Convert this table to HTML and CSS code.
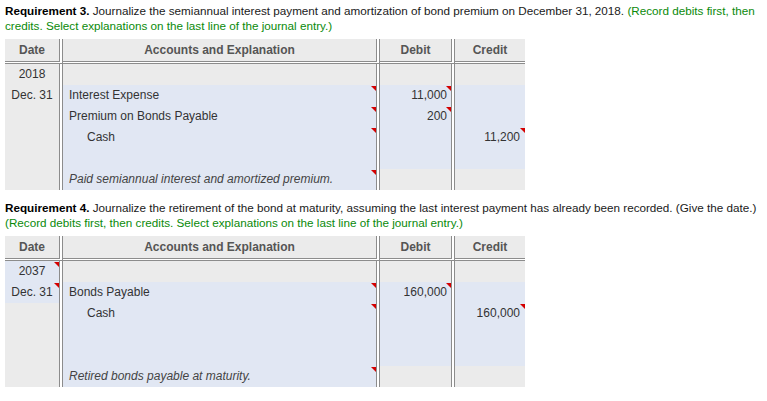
FILE: index.html
```html
<!DOCTYPE html>
<html>
<head>
<meta charset="utf-8">
<link rel="stylesheet" href="styles.css">
</head>
<body>
<div class="page">
  <p class="req"><b>Requirement 3.</b> Journalize the semiannual interest payment and amortization of bond premium on December 31, 2018. <span class="hint">(Record debits first, then credits. Select explanations on the last line of the journal entry.)</span></p>
  <table class="journal">
    <colgroup><col class="w-date"><col class="w-acct"><col class="w-debit"><col class="w-credit"></colgroup>
    <thead>
      <tr><th class="sep">Date</th><th class="sep">Accounts and Explanation</th><th class="sep">Debit</th><th>Credit</th></tr>
    </thead>
    <tbody>
      <tr><td class="sep date">2018</td><td class="sep"></td><td class="sep"></td><td></td></tr>
      <tr><td class="sep date">Dec. 31</td><td class="sep acct in flag">Interest Expense</td><td class="sep num in flag">11,000</td><td class="num last in"></td></tr>
      <tr><td class="sep date"></td><td class="sep acct in flag">Premium on Bonds Payable</td><td class="sep num in flag">200</td><td class="num last in"></td></tr>
      <tr><td class="sep date"></td><td class="sep acct in flag indent">Cash</td><td class="sep num in"></td><td class="num last in flag">11,200</td></tr>
      <tr><td class="sep date"></td><td class="sep acct in"></td><td class="sep num in"></td><td class="num last in"></td></tr>
      <tr><td class="sep date"></td><td class="sep acct in flag expl">Paid semiannual interest and amortized premium.</td><td class="sep"></td><td></td></tr>
    </tbody>
  </table>

  <p class="req"><b>Requirement 4.</b> Journalize the retirement of the bond at maturity, assuming the last interest payment has already been recorded. (Give the date.) <span class="hint">(Record debits first, then credits. Select explanations on the last line of the journal entry.)</span></p>
  <table class="journal">
    <colgroup><col class="w-date"><col class="w-acct"><col class="w-debit"><col class="w-credit"></colgroup>
    <thead>
      <tr><th class="sep">Date</th><th class="sep">Accounts and Explanation</th><th class="sep">Debit</th><th>Credit</th></tr>
    </thead>
    <tbody>
      <tr><td class="sep date in flag">2037</td><td class="sep"></td><td class="sep"></td><td></td></tr>
      <tr><td class="sep date in flag">Dec. 31</td><td class="sep acct in flag">Bonds Payable</td><td class="sep num in flag">160,000</td><td class="num last in"></td></tr>
      <tr><td class="sep date"></td><td class="sep acct in flag indent">Cash</td><td class="sep num in"></td><td class="num last in flag">160,000</td></tr>
      <tr><td class="sep date"></td><td class="sep acct in"></td><td class="sep num in"></td><td class="num last in"></td></tr>
      <tr><td class="sep date"></td><td class="sep acct in"></td><td class="sep num in"></td><td class="num last in"></td></tr>
      <tr><td class="sep date"></td><td class="sep acct in flag expl">Retired bonds payable at maturity.</td><td class="sep"></td><td></td></tr>
    </tbody>
  </table>
</div>
</body>
</html>
```

FILE: styles.css
```css
html, body {
  margin: 0;
  padding: 0;
  background: #fff;
}
.page {
  padding: 3px 0 0 5px;
  font-family: "Liberation Sans", Arial, sans-serif;
  font-size: 12px;
  color: #222;
}
.req {
  margin: 0 0 6px;
  font-size: 11.7px;
  line-height: 15px;
  color: #1a1a1a;
}
.req b {
  font-weight: bold;
  color: #000;
}
.hint {
  color: #0a8a0a;
}
.journal {
  border-collapse: separate;
  border-spacing: 0;
  table-layout: fixed;
  width: 520px;
  margin-bottom: 10px;
}
.w-date { width: 58px; }
.w-acct { width: 317px; }
.w-debit { width: 75px; }
.w-credit { width: 70px; }
.journal th,
.journal td {
  height: 21px;
  padding: 0;
  background: #ebebeb;
  background-clip: padding-box;
  box-sizing: border-box;
  position: relative;
  line-height: 21px;
  white-space: nowrap;
}
.journal th {
  font-weight: bold;
  color: #555;
  text-align: center;
  border-bottom: 3px double #8c8c8c;
  height: 25px;
}
.journal .sep {
  border-right: 4px double #8c8c8c;
}
.journal td {
  color: #333;
}
.journal td.in {
  background-color: #e1e7f3;
}
.journal td.date {
  text-align: center;
}
.journal td.acct {
  padding-left: 6px;
}
.journal td.acct.indent {
  padding-left: 24px;
}
.journal td.expl {
  font-style: italic;
  color: #444;
}
.journal td.num {
  text-align: right;
  padding-right: 4px;
}
.journal td.num.last {
  padding-right: 5px;
}
.flag::after {
  content: "";
  position: absolute;
  top: 1px;
  right: 0;
  width: 0;
  height: 0;
  border-top: 5px solid #d40000;
  border-left: 5px solid transparent;
}
```
